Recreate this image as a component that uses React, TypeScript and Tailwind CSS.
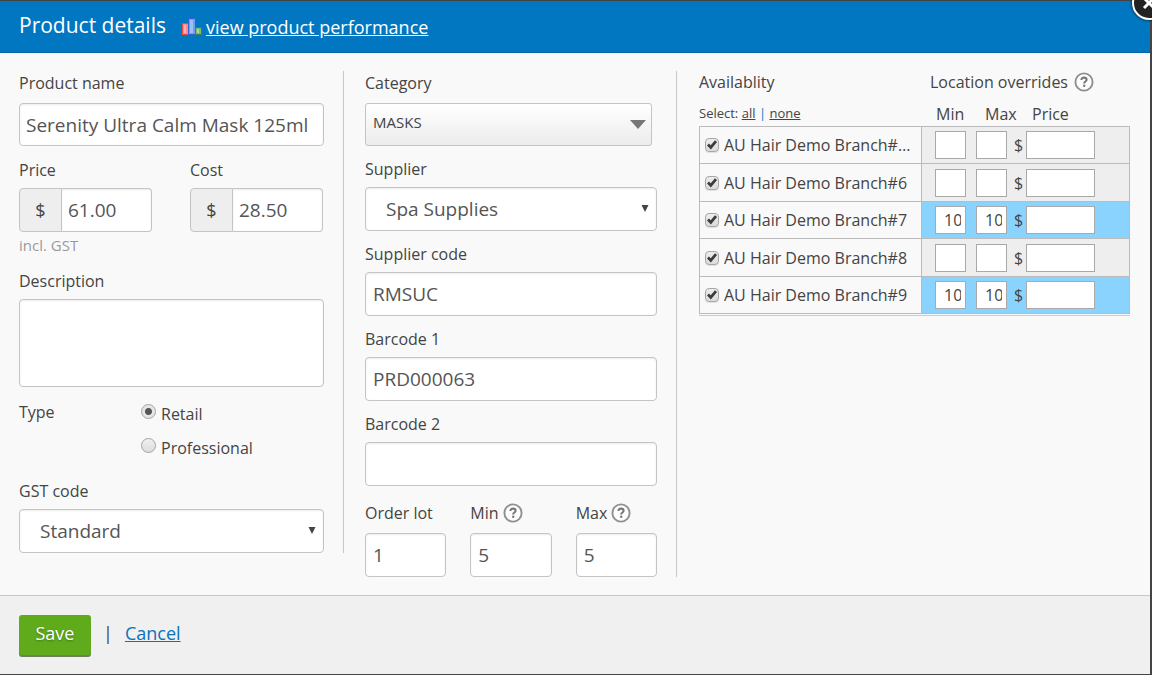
import type { ReactNode } from "react"

const inputClass =
  "block w-full rounded border border-[#c4c4c4] bg-white text-[19px] text-[#555] shadow-[inset_0_1px_2px_rgba(0,0,0,0.08)] outline-none"

const branches = [
  { name: "AU Hair Demo Branch#10", min: "", max: "" },
  { name: "AU Hair Demo Branch#6", min: "", max: "" },
  { name: "AU Hair Demo Branch#7", min: "100", max: "100" },
  { name: "AU Hair Demo Branch#8", min: "", max: "" },
  { name: "AU Hair Demo Branch#9", min: "100", max: "100" },
]

const ChartIcon = () => (
  <svg width="20" height="18" viewBox="0 0 20 18" className="shrink-0">
    <rect x="0.5" y="5.5" width="6" height="11" fill="#ff8a8a" stroke="#e84a4a" />
    <rect x="2" y="7" width="2" height="8" fill="#ffb3ae" />
    <rect x="6.5" y="0.5" width="7" height="16" fill="#6f9df0" stroke="#2f62cf" />
    <rect x="8" y="2" width="3" height="13" fill="#9dbff8" />
    <rect x="13.5" y="9.5" width="6" height="7" fill="#7db872" stroke="#3d8443" />
    <rect x="15" y="11" width="2" height="4" fill="#a9d69b" />
  </svg>
)

const HelpIcon = () => (
  <svg width="20" height="20" viewBox="0 0 20 20" fill="none" className="shrink-0">
    <circle cx="10" cy="10" r="8.6" fill="#fdfdfd" stroke="#909090" strokeWidth="1.9" />
    <path d="M7.4 8.1c0-1.6 1.1-2.5 2.6-2.5s2.6.9 2.6 2.2c0 1.7-2.4 1.8-2.4 3.6" stroke="#777" strokeWidth="2.1" />
    <circle cx="10.2" cy="13.8" r="1.2" fill="#777" />
  </svg>
)

const CheckBox = ({ id }: { id: string }) => (
  <span className="relative block size-3.5 shrink-0">
    <input
      id={id}
      type="checkbox"
      defaultChecked
      className="peer block size-3.5 appearance-none rounded-sm border border-[#a6a6a6] bg-gradient-to-b from-[#ededed] to-[#dcdcdc] shadow-[0_1px_1px_rgba(0,0,0,0.1)]"
    />
    <svg
      viewBox="0 0 14 14"
      className="pointer-events-none absolute inset-0 hidden size-3.5 peer-checked:block"
      fill="none"
    >
      <path d="M3 6.6l2.8 2.8 5.2-6.2" stroke="#3c3c3c" strokeWidth="2.8" />
    </svg>
  </span>
)

interface FieldProps {
  id: string
  label: string
  help?: boolean
  roomy?: boolean
  children: ReactNode
}

const Field = ({ id, label, help, roomy, children }: FieldProps) => (
  <div className="min-w-0">
    <div className={`flex h-6 items-center gap-1 ${roomy ? "mb-2" : "mb-1.5"}`}>
      <label htmlFor={id}>{label}</label>
      {help && <HelpIcon />}
    </div>
    {children}
  </div>
)

const MoneyInput = ({ id, value }: { id: string; value: string }) => (
  <div className="flex h-11">
    <span className="flex w-[43px] shrink-0 items-center justify-center rounded-l border border-[#c4c4c4] bg-[#eee] text-lg">
      $
    </span>
    <input
      id={id}
      defaultValue={value}
      className="w-full min-w-0 rounded-r border border-l-0 border-[#c4c4c4] bg-white px-1.5 text-[19px] text-[#555] shadow-[inset_0_1px_2px_rgba(0,0,0,0.08)] outline-none"
    />
  </div>
)

const SelectInput = ({ id, value }: { id: string; value: string }) => (
  <div className="relative">
    <select id={id} className={`${inputClass} h-11 appearance-none pl-5`}>
      <option>{value}</option>
    </select>
    <svg width="8" height="8" viewBox="0 0 8 8" className="pointer-events-none absolute top-[18px] right-2">
      <path d="M0.5 0h7L4 7z" fill="#444" />
    </svg>
  </div>
)

const RadioOption = ({ id, label, checked }: { id: string; label: string; checked?: boolean }) => (
  <div className="flex h-[34px] items-start gap-[5px]">
    <input
      id={id}
      type="radio"
      name="type"
      defaultChecked={checked}
      className="mt-1 size-[15px] shrink-0 appearance-none rounded-full border border-[#a3a3a3] bg-gradient-to-b from-[#f0f0f0] to-[#dcdcdc] checked:bg-[radial-gradient(circle,#555_0_3px,#e6e6e6_4px)]"
    />
    <label htmlFor={id} className="pt-0.5 leading-6">
      {label}
    </label>
  </div>
)

const ProductColumn = () => (
  <div className="border-r border-[#c8c8c8] pr-[19px]">
    <Field id="name" label="Product name" roomy>
      <input id="name" defaultValue="Serenity Ultra Calm Mask 125ml" className={`${inputClass} h-[43px] px-1.5`} />
    </Field>
    <div className="mt-3 grid grid-cols-2 gap-[38px] pr-px">
      <Field id="price" label="Price">
        <MoneyInput id="price" value="61.00" />
      </Field>
      <Field id="cost" label="Cost">
        <MoneyInput id="cost" value="28.50" />
      </Field>
    </div>
    <p className="mb-[13px] h-6 text-[15px] leading-[26px] text-[#999]">incl. GST</p>
    <Field id="description" label="Description">
      <textarea id="description" className={`${inputClass} h-[88px] resize-none px-1.5`} />
    </Field>
    <div className="mt-[13px] grid grid-cols-[122px_1fr]">
      <span className="leading-6">Type</span>
      <div className="pb-[11px]">
        <RadioOption id="retail" label="Retail" checked />
        <RadioOption id="professional" label="Professional" />
      </div>
    </div>
    <Field id="gst" label="GST code">
      <SelectInput id="gst" value="Standard" />
    </Field>
  </div>
)

const StockColumn = () => (
  <div className="border-r border-[#c8c8c8] pr-[19px] pl-[21px]">
    <div className="space-y-[11px]">
      <Field id="category" label="Category" roomy>
        <div className="relative mr-[5px]">
          <select
            id="category"
            className="block h-[43px] w-full appearance-none rounded-[3px] border border-[#c4c4c4] bg-gradient-to-b from-white to-[#ececec] pb-1 pl-[7px] text-[15px] text-[#444] outline-none"
          >
            <option>MASKS</option>
          </select>
          <svg width="16" height="9" viewBox="0 0 16 9" className="pointer-events-none absolute top-[17px] right-1.5">
            <path d="M0 0h16L8 9z" fill="#777" />
          </svg>
        </div>
      </Field>
      <Field id="supplier" label="Supplier">
        <SelectInput id="supplier" value="Spa Supplies" />
      </Field>
      <Field id="code" label="Supplier code">
        <input id="code" defaultValue="RMSUC" className={`${inputClass} h-11 px-[7px]`} />
      </Field>
      <Field id="barcode1" label="Barcode 1">
        <input id="barcode1" defaultValue="PRD000063" className={`${inputClass} h-11 px-[7px]`} />
      </Field>
      <Field id="barcode2" label="Barcode 2">
        <input id="barcode2" className={`${inputClass} h-11 px-[7px]`} />
      </Field>
    </div>
    <div className="mt-[15px] grid grid-cols-3 gap-6">
      <Field id="lot" label="Order lot" roomy>
        <input id="lot" defaultValue="1" className={`${inputClass} h-11 px-[7px]`} />
      </Field>
      <Field id="min" label="Min" help roomy>
        <input id="min" defaultValue="5" className={`${inputClass} h-11 px-[7px]`} />
      </Field>
      <Field id="max" label="Max" help roomy>
        <input id="max" defaultValue="5" className={`${inputClass} h-11 px-[7px]`} />
      </Field>
    </div>
  </div>
)

const smallInput = "block h-7 border border-[#a9a9a9] bg-white text-base text-[#444] outline-none"

const AvailabilityColumn = () => (
  <div className="pl-[22px]">
    <div className="border-b border-[#ccc] pb-px">
      <table className="w-full table-fixed border-separate border-spacing-0">
        <colgroup>
          <col />
          <col className="w-[49px]" />
          <col className="w-[41px]" />
          <col className="w-[118px]" />
        </colgroup>
        <thead className="text-left">
          <tr className="h-[31px] align-top">
            <th className="p-0 leading-[22px] font-normal">Availablity</th>
            <th colSpan={3} className="p-0 pl-2 font-normal">
              <span className="flex h-[22px] items-center gap-1.5">
                Location overrides <HelpIcon />
              </span>
            </th>
          </tr>
          <tr className="h-6">
            <th className="p-0 text-[13px] font-normal">
              Select:{" "}
              <a href="#all" className="underline">
                all
              </a>{" "}
              <span className="text-[#0a7cc4]">|</span>{" "}
              <a href="#none" className="underline">
                none
              </a>
            </th>
            <th className="p-0 pl-3.5 leading-6 font-normal">Min</th>
            <th className="p-0 pl-3.5 leading-6 font-normal">Max</th>
            <th className="p-0 pl-5 leading-6 font-normal">Price</th>
          </tr>
        </thead>
        <tbody className="[&>tr:first-child>td]:border-t">
          {branches.map((branch, i) => (
            <tr
              key={branch.name}
              className={`h-[37px] first:h-[38px] even:h-[38px] ${branch.min ? "bg-[#8ad3ff]" : "bg-[#eee]"}`}
            >
              <td className="border-x border-b border-[#bbb] bg-[#f9f9f9] p-0 pl-[5px]">
                <div className="flex items-center gap-[5px] pr-1.5">
                  <CheckBox id={`branch-${i}`} />
                  <label htmlFor={`branch-${i}`} className="truncate">
                    {branch.name}
                  </label>
                </div>
              </td>
              <td className="border-b border-[#bbb] p-0 pl-[13px]">
                <input aria-label="Min" defaultValue={branch.min} className={`${smallInput} w-[31px] pr-1 pl-2`} />
              </td>
              <td className="border-b border-[#bbb] p-0 pl-[5px]">
                <input aria-label="Max" defaultValue={branch.max} className={`${smallInput} w-[31px] pr-1 pl-2`} />
              </td>
              <td className="border-r border-b border-[#bbb] p-0 pl-0.5">
                <div className="flex items-center gap-[3px]">
                  <span>$</span>
                  <input aria-label="Price" className={`${smallInput} w-[69px] px-1`} />
                </div>
              </td>
            </tr>
          ))}
        </tbody>
      </table>
    </div>
  </div>
)

export default function App() {
  return (
    <div className="relative flex min-h-screen flex-col overflow-hidden bg-[#444] pt-px pr-0.5 pb-px font-['Open_Sans',sans-serif] text-base text-[#444]">
      <header className="flex h-[52px] items-center border-b border-[#0068a8] bg-[#0077c0] px-[19px] text-white">
        <h1 className="mr-4 pb-px text-[21px]">Product details</h1>
        <ChartIcon />
        <a href="#performance" className="ml-1 text-lg underline">
          view product performance
        </a>
      </header>

      <main className="grid grid-cols-[325fr_333fr_453fr] items-start bg-[#f9f9f9] pt-[18px] pr-5 pb-[18px] pl-[19px]">
        <ProductColumn />
        <StockColumn />
        <AvailabilityColumn />
      </main>

      <footer className="flex flex-1 items-start border-t border-[#c8c8c8] bg-[#f0f0f0] px-[19px] pt-[19px]">
        <button className="h-10 w-[72px] rounded-[3px] bg-[#5fab1c] pb-1 text-lg text-white shadow-[0_2px_0_#6d7f5f] [text-shadow:0_1px_2px_rgba(0,0,0,0.3)]">
          Save
        </button>
        <span className="mx-3 text-lg leading-9">|</span>
        <a href="#cancel" className="text-lg leading-9 text-[#0a72bd] underline">
          Cancel
        </a>
      </footer>

      <button
        aria-label="Close"
        className="absolute -top-3.5 -right-3.5 flex size-[34px] items-center justify-center rounded-full border-2 border-white bg-[#222] shadow-[0_0_3px_#000]"
      >
        <svg width="14" height="14" viewBox="0 0 14 14">
          <path d="M2 2l10 10M12 2L2 12" stroke="#fff" strokeWidth="3" />
        </svg>
      </button>
    </div>
  )
}
